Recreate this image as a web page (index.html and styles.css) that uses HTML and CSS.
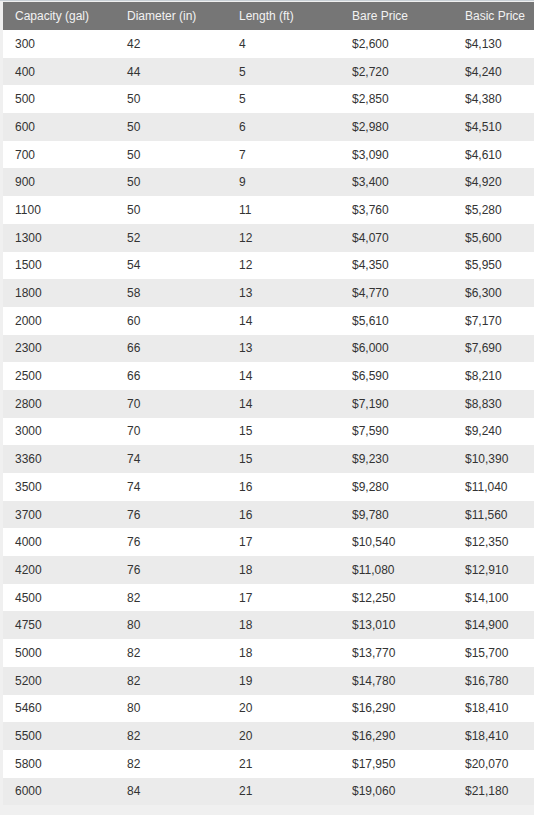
FILE: index.html
```html
<!DOCTYPE html>
<html>
<head>
<meta charset="utf-8">
<link rel="stylesheet" href="styles.css">
</head>
<body>
<div class="wrap">
<table class="prices">
<colgroup><col class="c1"><col class="c2"><col class="c3"><col class="c4"><col class="c5"></colgroup>
<thead>
<tr><th>Capacity (gal)</th><th>Diameter (in)</th><th>Length (ft)</th><th>Bare Price</th><th>Basic Price</th></tr>
</thead>
<tbody>
<tr><td>300</td><td>42</td><td>4</td><td>$2,600</td><td>$4,130</td></tr>
<tr><td>400</td><td>44</td><td>5</td><td>$2,720</td><td>$4,240</td></tr>
<tr><td>500</td><td>50</td><td>5</td><td>$2,850</td><td>$4,380</td></tr>
<tr><td>600</td><td>50</td><td>6</td><td>$2,980</td><td>$4,510</td></tr>
<tr><td>700</td><td>50</td><td>7</td><td>$3,090</td><td>$4,610</td></tr>
<tr><td>900</td><td>50</td><td>9</td><td>$3,400</td><td>$4,920</td></tr>
<tr><td>1100</td><td>50</td><td>11</td><td>$3,760</td><td>$5,280</td></tr>
<tr><td>1300</td><td>52</td><td>12</td><td>$4,070</td><td>$5,600</td></tr>
<tr><td>1500</td><td>54</td><td>12</td><td>$4,350</td><td>$5,950</td></tr>
<tr><td>1800</td><td>58</td><td>13</td><td>$4,770</td><td>$6,300</td></tr>
<tr><td>2000</td><td>60</td><td>14</td><td>$5,610</td><td>$7,170</td></tr>
<tr><td>2300</td><td>66</td><td>13</td><td>$6,000</td><td>$7,690</td></tr>
<tr><td>2500</td><td>66</td><td>14</td><td>$6,590</td><td>$8,210</td></tr>
<tr><td>2800</td><td>70</td><td>14</td><td>$7,190</td><td>$8,830</td></tr>
<tr><td>3000</td><td>70</td><td>15</td><td>$7,590</td><td>$9,240</td></tr>
<tr><td>3360</td><td>74</td><td>15</td><td>$9,230</td><td>$10,390</td></tr>
<tr><td>3500</td><td>74</td><td>16</td><td>$9,280</td><td>$11,040</td></tr>
<tr><td>3700</td><td>76</td><td>16</td><td>$9,780</td><td>$11,560</td></tr>
<tr><td>4000</td><td>76</td><td>17</td><td>$10,540</td><td>$12,350</td></tr>
<tr><td>4200</td><td>76</td><td>18</td><td>$11,080</td><td>$12,910</td></tr>
<tr><td>4500</td><td>82</td><td>17</td><td>$12,250</td><td>$14,100</td></tr>
<tr><td>4750</td><td>80</td><td>18</td><td>$13,010</td><td>$14,900</td></tr>
<tr><td>5000</td><td>82</td><td>18</td><td>$13,770</td><td>$15,700</td></tr>
<tr><td>5200</td><td>82</td><td>19</td><td>$14,780</td><td>$16,780</td></tr>
<tr><td>5460</td><td>80</td><td>20</td><td>$16,290</td><td>$18,410</td></tr>
<tr><td>5500</td><td>82</td><td>20</td><td>$16,290</td><td>$18,410</td></tr>
<tr><td>5800</td><td>82</td><td>21</td><td>$17,950</td><td>$20,070</td></tr>
<tr><td>6000</td><td>84</td><td>21</td><td>$19,060</td><td>$21,180</td></tr>
</tbody>
</table>
</div>
</body>
</html>
```
FILE: styles.css
```css
html, body {
  margin: 0;
  padding: 0;
  background: #f0f0f0;
}
.wrap {
  border-top: 1px solid #c9d0d6;
  padding: 1px 0 0 3px;
}
.prices {
  border-collapse: collapse;
  table-layout: fixed;
  width: 531px;
  font-family: "Liberation Sans", Arial, sans-serif;
  font-size: 12px;
  color: #333;
}
.c1, .c2 { width: 112px; }
.c3, .c4 { width: 113px; }
.c5 { width: 81px; }
.prices th, .prices td {
  padding: 0 0 0 12px;
  text-align: left;
  font-weight: normal;
  white-space: nowrap;
  vertical-align: middle;
}
.prices thead tr {
  height: 28px;
  background: #767676;
}
.prices th {
  color: #f2f2f2;
}
.prices tbody tr {
  height: 27.7px;
  background: #ffffff;
}
.prices tbody tr:nth-child(even) {
  background: #ebebeb;
}
```
